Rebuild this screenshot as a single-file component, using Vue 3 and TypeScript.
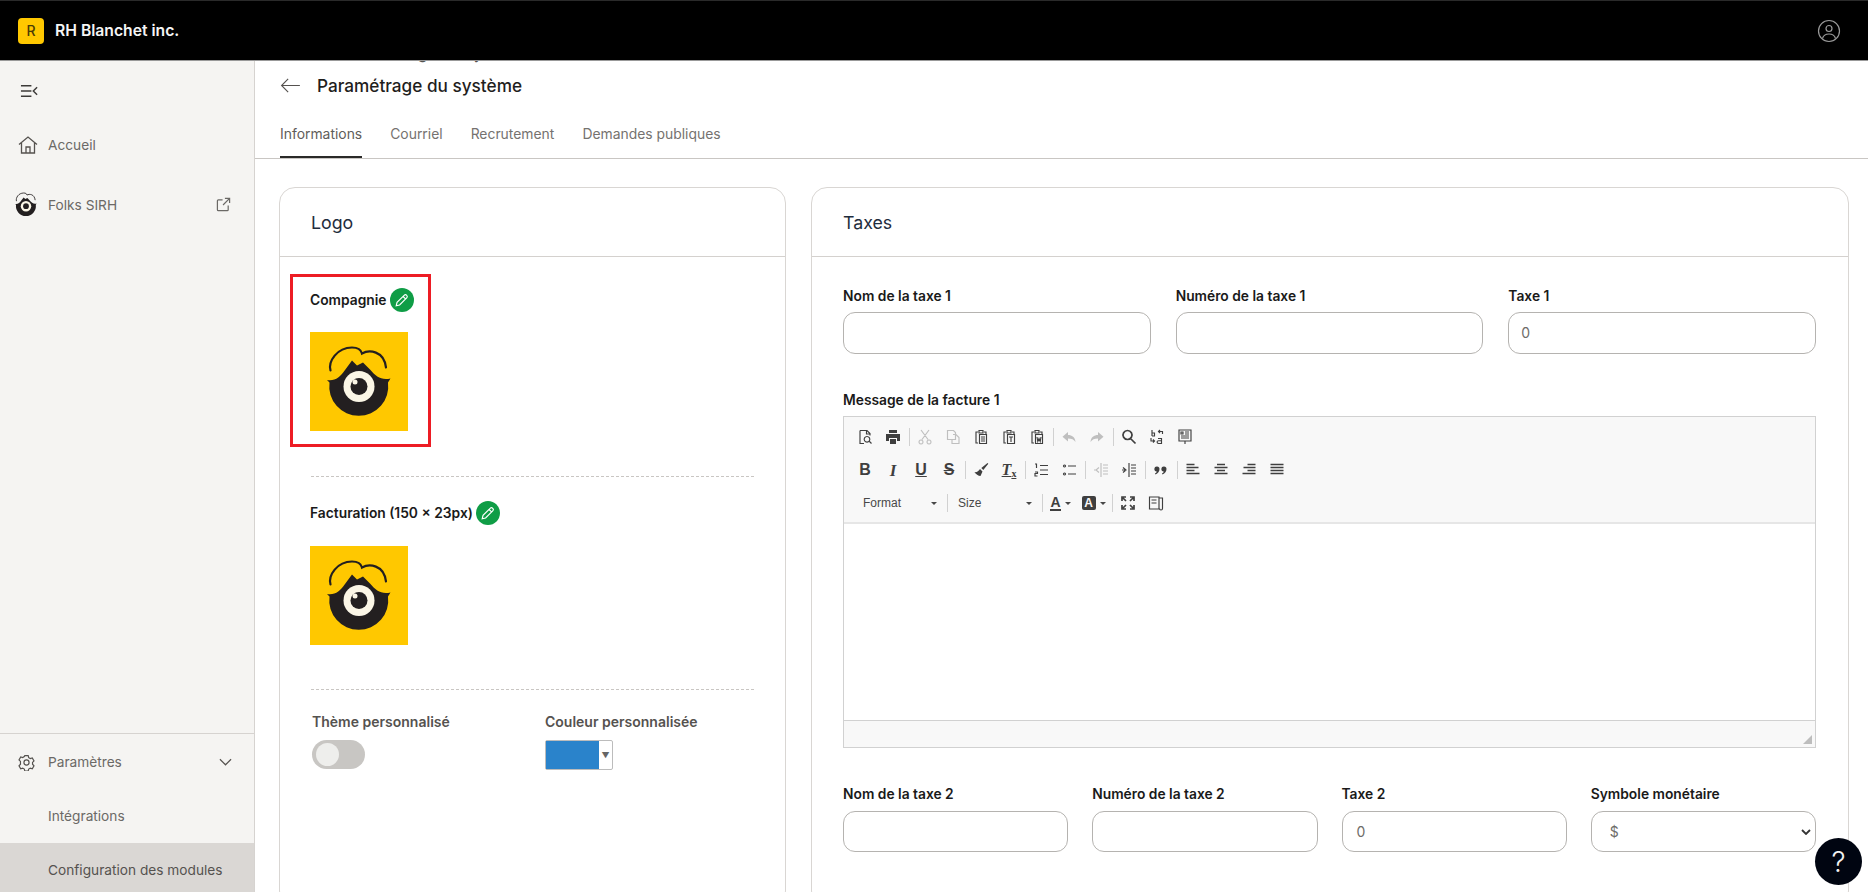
<script setup lang="ts">
type Tool = { key: string; off?: boolean } | "sep";

const row1: Tool[] = [
  { key: "preview" }, { key: "print" }, "sep",
  { key: "cut", off: true }, { key: "copy", off: true }, { key: "paste" }, { key: "pasteT" }, { key: "pasteW" }, "sep",
  { key: "undo", off: true }, { key: "redo", off: true }, "sep",
  { key: "find" }, { key: "replace" }, { key: "template" }
];
const row2: Tool[] = [
  "sep", { key: "ol" }, { key: "ul" }, "sep", { key: "outdent", off: true }, { key: "indent" }, "sep",
  { key: "quote" }, "sep", { key: "left" }, { key: "center" }, { key: "right" }, { key: "justify" }
];

const paths: Record<string, string> = {
  preview: "M3 1.5h7l3 3v2M3 1.5v13h4M9.500 1.500v3.500h3.500M10 7.500a2.800 2.800 0 1 0 .01 0zM12 12l2.500 2.500",
  print: "M4 1h8v3H4zM1 5h14v7h-3V9H4v3H1zM5 10h6v5H5z",
  cut: "M4 1l7 9.500M12 1l-7 9.500M4 11a2 2 0 1 0 .01 0M12 11a2 2 0 1 0 .01 0",
  copy: "M2.500 1.500h6l2 2v7h-8zM8 5.500h3l3 3v6H7v-4",
  paste: "M5 3H3v11h2M6 1.500h4V4H6zM11 3h2v2M6.500 5.500h7v9h-7zM8 8h4M8 10h4M8 12h4",
  pasteT: "M5 3H3v11h2M6 1.500h4V4H6zM11 3h2v2M6.500 5.500h7v9h-7zM8 8h4M10 8v5",
  pasteW: "M5 3H3v11h2M6 1.500h4V4H6zM11 3h2v2M6.500 5.500h7v9h-7zM8 8l.8 4.500L10 9.500l1.200 3L12 8",
  undo: "M7 3v3C11 6 14 8 14.500 13c-1.500-2.500-4-3.500-7.500-3.500v3L1.500 7.700z",
  redo: "M9 3v3C5 6 2 8 1.500 13c1.500-2.500 4-3.500 7.500-3.500v3l5.500-4.800z",
  find: "M6.500 1.500a4.500 4.500 0 1 0 .01 0M10 10l4.500 4.500",
  replace: "M3 1v6M3 4h2.500v3H3M9.500 2.500h4V5M11 1L9.500 2.500 11 4M2 9v3h3.500M4 10.500L5.500 12 4 13.500M9 9.500h3.500v5H9.500a1.200 1.200 0 0 1 0-2.800h3",
  template: "M2 1h12v11H2zM4 3h2v2H4zM8 3h4M8 5h4M4 7h8M4 9h8M8 12v3",
  ol: "M2 2h1.500v4M2 10h2.500v1.500H2V14h2.500M7 3.500h8M7 8h8M7 12.500h8",
  ul: "M7 4h8M7 12h8M3.500 3a1 1 0 1 0 .01 0M3.500 11a1 1 0 1 0 .01 0",
  outdent: "M8 1v14M10 3h5M10 6h5M10 9h5M10 12h5M6 5.500L3 8l3 2.500M1 8h2",
  indent: "M8 1v14M10 3h5M10 6h5M10 9h5M10 12h5M2 5.500L5 8l-3 2.500M1 8h3",
  left: "M1.500 2.500h8M1.500 5.500h12M1.500 8.500h8M1.500 11.500h13",
  center: "M4 2.500h8M1.500 5.500h13M4 8.500h8M1.500 11.500h13",
  right: "M6.500 2.500h8M2.500 5.500h12M6.500 8.500h8M1.500 11.500h13",
  justify: "M1.500 2.500h13M1.500 5.500h13M1.500 8.500h13M1.500 11.500h13",
  quote: "M4 4.500a2.500 2.500 0 0 1 2.500 2.500c0 2.500-1.500 4.500-4 5.500l-.5-1c1-.5 1.500-1 1.700-2A2.500 2.500 0 0 1 4 4.500zM11 4.500A2.500 2.500 0 0 1 13.500 7c0 2.500-1.500 4.500-4 5.500l-.5-1c1-.5 1.500-1 1.700-2A2.500 2.500 0 0 1 11 4.500z",
  maximize: "M2 6V2h4M10 2h4v4M14 10v4h-4M6 14H2v-4M3 3l3 3M13 3l-3 3M13 13l-3-3M3 13l3-3",
  blocks: "M1.500 2h9.500v12H1.500zM3.500 5h5M3.500 8h5M11 3h3.500v10.500a1.500 1.500 0 0 1-3 0"
};

const filled = new Set(["undo", "redo", "print", "quote"]);
const thick = new Set(["find", "left", "center", "right", "justify", "maximize"]);

const fieldsTop = [
  { label: "Nom de la taxe 1", value: "" },
  { label: "Numéro de la taxe 1", value: "" },
  { label: "Taxe 1", value: "0" }
];
const fieldsBottom = [
  { label: "Nom de la taxe 2", value: "" },
  { label: "Numéro de la taxe 2", value: "" },
  { label: "Taxe 2", value: "0" }
];
const penPath = "M3 13l.8-3.200 6.700-6.700a1.600 1.600 0 0 1 2.400 2.400l-6.700 6.700zM9.500 4.200l2.300 2.300";
const hair = "M20.500 38C18 29 27 15 42 15c6 0 9 2 10 6 7-4 22-3 24 14";
const head = "M17 47.500c8 1.500 13-3 18-10l7-9.500 5 5 6-3 7 7c6 7 11 11 20.500 9L78 50a29.500 29.500 0 1 1-58.500 0z";
</script>

<template>
  <div class="page">
    <header class="topbar">
      <div class="brand">
        <span class="brand-badge">R</span>
        <span class="brand-name">RH Blanchet inc.</span>
      </div>
      <svg class="user" viewBox="0 0 24 24" fill="none" stroke="#9a9a9a" stroke-width="1.200">
        <circle cx="12" cy="12" r="10.500" />
        <circle cx="12" cy="9.500" r="3" />
        <path d="M5.500 19.500c.8-3 3.300-4.500 6.500-4.500s5.700 1.500 6.500 4.500" />
      </svg>
    </header>

    <div class="body">
      <aside class="sidebar">
        <div class="side-top">
          <svg class="collapse" viewBox="0 0 20 14" fill="none" stroke="#3c3a38" stroke-width="1.500">
            <path d="M1 1.500h11M1 7h11M1 12.500h11M18 3l-4 4 4 4" />
          </svg>
          <a class="side-link first">
            <svg class="home" viewBox="0 0 20 20" fill="none" stroke="#55524f" stroke-width="1.300">
              <path d="M1 9.500L10 2l9 7.500M3.500 8v10h13V8M8 18v-6h4v6" />
            </svg>
            <span>Accueil</span>
          </a>
          <a class="side-link folks">
            <svg class="folks-logo" viewBox="14 12 70 74">
              <path :d="hair" fill="none" stroke="#231f20" stroke-width="2.500" stroke-linecap="round" />
              <path :d="head" fill="#231f20" />
              <circle cx="49" cy="54" r="15.500" fill="#fbf6e6" />
              <circle cx="49" cy="54" r="8.500" fill="#231f20" />
            </svg>
            <span>Folks SIRH</span>
            <svg class="ext" viewBox="0 0 16 16" fill="none" stroke="#6b6966" stroke-width="1.300">
              <path d="M7 3H2.500a1 1 0 0 0-1 1v9.500a1 1 0 0 0 1 1H12a1 1 0 0 0 1-1V9M9.500 1.500h5v5M14.500 1.500L7.500 8.500" />
            </svg>
          </a>
        </div>
        <div class="side-bottom">
          <a class="side-link settings">
            <svg class="gear" viewBox="0 0 20 20" fill="none" stroke="#55524f" stroke-width="1.400">
              <path d="M8 1.200h4l.6 2.300 1.900 1.100 2.300-.7 2 3.500-1.700 1.700v2.200l1.700 1.700-2 3.500-2.300-.7-1.900 1.100-.6 2.300H8l-.6-2.300-1.900-1.100-2.300.7-2-3.500 1.700-1.700V7.900L1.200 6.200l2-3.500 2.300.7 1.900-1.100z" transform="translate(0 .8)" />
              <circle cx="10" cy="10" r="3" />
            </svg>
            <span>Paramètres</span>
            <svg class="chev" viewBox="0 0 14 8" fill="none" stroke="#55524f" stroke-width="1.300">
              <path d="M1 1l6 6 6-6" />
            </svg>
          </a>
          <a class="sub-link">Intégrations</a>
          <a class="sub-link active">Configuration des modules</a>
        </div>
      </aside>

      <main class="main">
        <div class="ghost">Paramétrage du système</div>
        <div class="heading">
          <svg class="back" viewBox="0 0 22 16" fill="none" stroke="#55524f" stroke-width="1.200">
            <path d="M21 8H1.500M8.500 1L1.500 8l7 7" />
          </svg>
          <h1>Paramétrage du système</h1>
        </div>
        <nav class="tabs">
          <a class="tab current">Informations</a>
          <a class="tab">Courriel</a>
          <a class="tab">Recrutement</a>
          <a class="tab">Demandes publiques</a>
        </nav>

        <div class="cards">
          <section class="card logo-card">
            <h2>Logo</h2>
            <div class="logo-body">
              <div class="marked">
                <div class="logo-label">
                  <b>Compagnie</b>
                  <span class="pen">
                    <svg viewBox="0 0 16 16" fill="none" stroke="#fff" stroke-width="1.100"><path :d="penPath" /></svg>
                  </span>
                </div>
                <div class="logo-box">
                  <svg viewBox="0 0 98 98">
                    <path :d="hair" fill="none" stroke="#231f20" stroke-width="2.200" stroke-linecap="round" />
                    <path :d="head" fill="#231f20" />
                    <circle cx="49" cy="54" r="15.500" fill="#fbf6e6" />
                    <circle cx="49" cy="54" r="8.500" fill="#231f20" />
                    <circle cx="45" cy="49.500" r="2.500" fill="#fbf6e6" />
                  </svg>
                </div>
              </div>
              <hr class="dash first-dash" />
              <div class="logo-label billing">
                <b>Facturation (150 × 23px)</b>
                <span class="pen">
                  <svg viewBox="0 0 16 16" fill="none" stroke="#fff" stroke-width="1.100"><path :d="penPath" /></svg>
                </span>
              </div>
              <div class="logo-box second">
                <svg viewBox="0 0 98 98">
                  <path :d="hair" fill="none" stroke="#231f20" stroke-width="2.200" stroke-linecap="round" />
                  <path :d="head" fill="#231f20" />
                  <circle cx="49" cy="54" r="15.500" fill="#fbf6e6" />
                  <circle cx="49" cy="54" r="8.500" fill="#231f20" />
                  <circle cx="45" cy="49.500" r="2.500" fill="#fbf6e6" />
                </svg>
              </div>
              <hr class="dash second-dash" />
              <div class="theme-row">
                <div class="theme-col">
                  <span class="theme-label">Thème personnalisé</span>
                  <span class="toggle"><i></i></span>
                </div>
                <div class="theme-col">
                  <span class="theme-label">Couleur personnalisée</span>
                  <span class="color"><i></i><em>▼</em></span>
                </div>
              </div>
            </div>
          </section>

          <section class="card tax-card">
            <h2>Taxes</h2>
            <div class="tax-body">
              <div class="row top-row">
                <label v-for="f in fieldsTop" :key="f.label" class="field">
                  <span>{{ f.label }}</span>
                  <div class="input">{{ f.value }}</div>
                </label>
              </div>

              <div class="editor-label">Message de la facture 1</div>
              <div class="editor">
                <div class="toolbar">
                  <div class="tool-row">
                    <template v-for="(t, i) in row1" :key="i">
                      <span v-if="t === 'sep'" class="sep"></span>
                      <span v-else class="btn" :class="{ off: t.off }">
                        <svg viewBox="0 0 16 16" :class="{ thick: thick.has(t.key), solid: filled.has(t.key) }"><path :d="paths[t.key]" /></svg>
                      </span>
                    </template>
                  </div>
                  <div class="tool-row">
                    <span class="btn txt b">B</span>
                    <span class="btn txt i">I</span>
                    <span class="btn txt u">U</span>
                    <span class="btn txt s">S</span>
                    <span class="sep"></span>
                    <span class="btn">
                      <svg viewBox="0 0 16 16" class="solid"><path d="M14.500 1l.8.8-5 6.200-2-2zM7 7l2.500 2.500-2 4.500c-2 0-5-2-6-4 2 .5 4-.5 5.500-3z" /></svg>
                    </span>
                    <span class="btn txt clear">T<small>x</small></span>
                    <template v-for="(t, i) in row2" :key="i">
                      <span v-if="t === 'sep'" class="sep"></span>
                      <span v-else class="btn" :class="{ off: t.off }">
                        <svg viewBox="0 0 16 16" :class="{ thick: thick.has(t.key), solid: filled.has(t.key) }"><path :d="paths[t.key]" /></svg>
                      </span>
                    </template>
                  </div>
                  <div class="tool-row third">
                    <span class="combo format">Format<i class="arrow"></i></span>
                    <span class="sep"></span>
                    <span class="combo size">Size<i class="arrow"></i></span>
                    <span class="sep"></span>
                    <span class="color-btn"><b class="a-line">A</b><i class="arrow"></i></span>
                    <span class="color-btn"><b class="a-box">A</b><i class="arrow"></i></span>
                    <span class="sep"></span>
                    <span class="btn"><svg viewBox="0 0 16 16" class="thick"><path :d="paths.maximize" /></svg></span>
                    <span class="btn"><svg viewBox="0 0 16 16"><path :d="paths.blocks" /></svg></span>
                  </div>
                </div>
                <div class="edit-area"></div>
                <div class="edit-foot"><i class="grip"></i></div>
              </div>

              <div class="row bottom-row">
                <label v-for="f in fieldsBottom" :key="f.label" class="field">
                  <span>{{ f.label }}</span>
                  <div class="input">{{ f.value }}</div>
                </label>
                <label class="field">
                  <span>Symbole monétaire</span>
                  <div class="input select">
                    $
                    <svg viewBox="0 0 10 6" fill="none" stroke="#333" stroke-width="1.800"><path d="M1 1l4 4 4-4" /></svg>
                  </div>
                </label>
              </div>
            </div>
          </section>
        </div>
      </main>
    </div>

    <button class="help">?</button>
  </div>
</template>

<style>
html,
body {
  margin: 0;
  overflow: hidden;
}
</style>

<style scoped>
.page {
  position: relative;
  width: 1868px;
  height: 892px;
  overflow: hidden;
  font-family: Inter, "Liberation Sans", sans-serif;
  color: #1c1b1a;
  background: #fff;
}

.topbar {
  height: 61px;
  box-sizing: border-box;
  border-top: 1px solid #2a2a2a;
  border-bottom: 1px solid #999;
  background: #000;
  display: flex;
  align-items: center;
  justify-content: space-between;
  padding: 0 27px 0 18px;
}

.brand {
  display: flex;
  align-items: center;
  gap: 11px;
}

.brand-badge {
  width: 26px;
  height: 26px;
  border-radius: 4px;
  background: #ffc800;
  color: #4b3c05;
  font-size: 14px;
  font-weight: 500;
  display: flex;
  align-items: center;
  justify-content: center;
}

.brand-name {
  color: #f5f5f5;
  font-size: 15.700px;
  font-weight: 600;
}

.user {
  width: 24px;
  height: 24px;
}

.body {
  display: flex;
  height: 831px;
}

.sidebar {
  width: 255px;
  flex: none;
  box-sizing: border-box;
  background: #f5f4f2;
  border-right: 1px solid #d6d3d0;
  display: flex;
  flex-direction: column;
  justify-content: space-between;
  overflow: hidden;
}

.collapse {
  display: block;
  width: 19px;
  height: 14px;
  margin: 23px 0 0 20px;
}

.side-link {
  display: flex;
  align-items: center;
  font-size: 13.700px;
  color: #6b6966;
  padding-left: 18px;
}

.side-link.first {
  margin-top: 37px;
  gap: 10px;
}

.home {
  width: 20px;
  height: 20px;
  flex: none;
}

.gear {
  width: 17px;
  height: 17px;
  flex: none;
}

.side-link.folks {
  margin-top: 37px;
  padding-left: 14px;
  gap: 10px;
}

.folks-logo {
  width: 24px;
  height: 25px;
  flex: none;
}

.ext {
  width: 15px;
  height: 15px;
  margin-left: auto;
  margin-right: 23px;
}

.side-bottom {
  border-top: 1px solid #d6d3d0;
  margin-bottom: -5px;
}

.side-link.settings {
  padding-top: 18px;
  padding-bottom: 17px;
  gap: 13px;
  line-height: 20px;
}

.chev {
  width: 13px;
  height: 8px;
  margin-left: auto;
  margin-right: 22px;
}

.sub-link {
  display: block;
  height: 54px;
  line-height: 54px;
  padding-left: 48px;
  font-size: 13.700px;
  color: #6b6966;
}

.sub-link.active {
  background: #dad7d4;
  color: #55524f;
}

.main {
  flex: 1;
  min-width: 0;
  position: relative;
  overflow: hidden;
}

.ghost {
  position: absolute;
  top: -18px;
  left: 85px;
  font-size: 16px;
  line-height: 20px;
  color: #55524f;
}

.heading {
  display: flex;
  align-items: center;
  gap: 16px;
  height: 49px;
  padding-left: 25px;
}

.back {
  width: 21px;
  height: 15px;
}

h1 {
  margin: 0;
  font-size: 17.200px;
  font-weight: 500;
  color: #1f1e1d;
}

.tabs {
  display: flex;
  gap: 28px;
  height: 48px;
  padding-left: 25px;
  border-bottom: 1px solid #c9c6c3;
}

.tab {
  font-size: 13.900px;
  color: #75726f;
  line-height: 49px;
  height: 48px;
  box-sizing: border-box;
}

.tab.current {
  color: #5f5d5a;
  border-bottom: 2px solid #2a2928;
}

.cards {
  display: flex;
  gap: 25px;
  padding: 28px 0 0 24px;
}

.card {
  height: 720px;
  flex: none;
  box-sizing: border-box;
  border: 1px solid #d9d6d3;
  border-radius: 16px;
  background: #fff;
}

.logo-card {
  width: 507px;
}

.tax-card {
  width: 1038px;
}

.card h2 {
  margin: 0;
  height: 69px;
  box-sizing: border-box;
  padding: 0 31px;
  font-size: 17.800px;
  font-weight: 400;
  line-height: 70px;
  color: #1f2d3d;
  border-bottom: 1px solid #d4d1ce;
}

.logo-body {
  padding: 17px 31px 0 10px;
}

.marked {
  width: 141px;
  height: 173px;
  box-sizing: border-box;
  border: 3px solid #ed1c24;
  padding: 11px 0 0 17px;
}

.logo-label {
  display: flex;
  align-items: center;
  gap: 3px;
  height: 24px;
  font-size: 13.800px;
  color: #1a1a1a;
}

.logo-label b {
  font-weight: 600;
}

.pen {
  width: 24px;
  height: 24px;
  border-radius: 50%;
  background: #0f9d46;
  display: flex;
  align-items: center;
  justify-content: center;
}

.pen svg {
  width: 17px;
  height: 17px;
}

.logo-box {
  width: 98px;
  height: 99px;
  background: #ffc800;
  margin-top: 20px;
}

.logo-box svg {
  display: block;
  width: 98px;
  height: 99px;
}

.dash {
  margin: 0 0 0 21px;
  border: 0;
  border-top: 1px dashed #c9c6c3;
}

.first-dash {
  margin-top: 29px;
}

.billing {
  margin: 24px 0 0 20px;
}

.logo-box.second {
  margin: 21px 0 0 20px;
}

.second-dash {
  margin-top: 44px;
}

.theme-row {
  display: flex;
  margin: 24px 0 0 22px;
}

.theme-col {
  width: 233px;
  flex: none;
  display: flex;
  flex-direction: column;
  gap: 10px;
}

.theme-label {
  font-size: 14px;
  font-weight: 600;
  color: #55524f;
  line-height: 16px;
}

.toggle {
  width: 53px;
  height: 29px;
  border-radius: 15px;
  background: #c8c6c3;
  display: block;
  position: relative;
}

.toggle i {
  position: absolute;
  left: 4px;
  top: 3px;
  width: 23px;
  height: 23px;
  border-radius: 50%;
  background: #eeeeec;
}

.color {
  width: 68px;
  height: 30px;
  box-sizing: border-box;
  display: flex;
  border: 1px solid #bcbcbc;
  border-radius: 2px;
  background: #fff;
}

.color i {
  flex: none;
  width: 53px;
  background: #2a83cb;
}

.color em {
  flex: 1;
  font-style: normal;
  font-size: 8px;
  color: #666;
  text-align: center;
  line-height: 28px;
}

.tax-body {
  padding: 31px 32px 0 31px;
}

.row {
  display: flex;
}

.top-row {
  gap: 25px;
}

.top-row .input {
  padding-left: 12px;
}

.bottom-row {
  gap: 24px;
  margin-top: 38px;
}

.field {
  flex: 1;
  min-width: 0;
  display: flex;
  flex-direction: column;
  gap: 8px;
  font-size: 13.800px;
  font-weight: 600;
  color: #1a1a1a;
}

.field > span {
  line-height: 16px;
}

.input {
  height: 42px;
  box-sizing: border-box;
  border: 1px solid #b5b3b0;
  border-radius: 12px;
  font-size: 14px;
  font-weight: 400;
  color: #6e6c69;
  padding: 0 14px;
  line-height: 40px;
  position: relative;
}

.input.select {
  padding-left: 18px;
}

.input.select svg {
  position: absolute;
  right: 4px;
  top: 17px;
  width: 10px;
  height: 6px;
}

.bottom-row .field {
  gap: 9px;
}

.bottom-row .input {
  height: 41px;
}

.editor-label {
  margin-top: 38px;
  font-size: 13.800px;
  font-weight: 600;
  color: #1a1a1a;
  line-height: 16px;
}

.editor {
  margin-top: 8px;
  height: 332px;
  box-sizing: border-box;
  border: 1px solid #d1d1d1;
  display: flex;
  flex-direction: column;
}

.toolbar {
  height: 107px;
  box-sizing: border-box;
  background: #f8f8f8;
  border-bottom: 2px solid #e6e6e6;
  padding: 6px 0 0 7px;
  display: flex;
  flex-direction: column;
  gap: 5px;
}

.tool-row {
  height: 28px;
  display: flex;
  align-items: center;
}

.btn {
  width: 28px;
  height: 24px;
  flex: none;
  display: flex;
  align-items: center;
  justify-content: center;
  color: #3f3f3f;
}

.btn svg {
  width: 16px;
  height: 16px;
  fill: none;
  stroke: #3f3f3f;
  stroke-width: 1.150;
}

.btn svg.thick {
  stroke-width: 1.700;
}

.btn svg.solid {
  fill: #3f3f3f;
  stroke: none;
}

.btn.off {
  opacity: 0.3;
}

.sep {
  width: 1px;
  height: 18px;
  flex: none;
  margin: 0 1.500px;
  background: #d1d1d1;
}

.txt {
  font-family: "Liberation Sans", sans-serif;
  font-size: 16px;
  line-height: 1;
}

.txt.b {
  font-weight: 700;
}

.txt.i {
  font-family: "Liberation Serif", serif;
  font-weight: 700;
  font-style: italic;
  font-size: 17px;
}

.txt.u {
  font-weight: 700;
  text-decoration: underline;
}

.txt.s {
  font-weight: 700;
  text-decoration: line-through;
}

.txt.clear {
  font-family: "Liberation Serif", serif;
  font-style: italic;
  font-weight: 700;
  text-decoration: underline;
}

.txt.clear small {
  font-size: 10px;
  font-style: normal;
  align-self: flex-end;
  margin-bottom: 3px;
}

.third {
  font-family: "Liberation Sans", sans-serif;
}

.combo {
  position: relative;
  flex: none;
  font-size: 12px;
  color: #484848;
  height: 24px;
  line-height: 24px;
  box-sizing: border-box;
}

.combo.format {
  width: 94px;
  padding-left: 12px;
}

.combo.size {
  width: 91px;
  padding-left: 9px;
}

.arrow {
  display: inline-block;
  width: 0;
  height: 0;
  border-left: 3px solid transparent;
  border-right: 3px solid transparent;
  border-top: 3px solid #474747;
}

.combo .arrow {
  position: absolute;
  right: 8px;
  top: 11px;
}

.color-btn {
  flex: none;
  width: 33px;
  display: flex;
  align-items: center;
  justify-content: center;
  gap: 4px;
}

.a-line {
  font-size: 14px;
  color: #3f3f3f;
  border-bottom: 2px solid #3f3f3f;
  line-height: 14px;
}

.a-box {
  width: 14px;
  height: 14px;
  background: #3f3f3f;
  color: #f8f8f8;
  font-size: 12px;
  line-height: 14px;
  text-align: center;
  border-radius: 2px;
}

.edit-area {
  flex: 1;
  background: #fff;
}

.edit-foot {
  height: 26px;
  position: relative;
  background: #f8f8f8;
  border-top: 1px solid #d1d1d1;
}

.grip {
  position: absolute;
  right: 3px;
  bottom: 3px;
  width: 0;
  height: 0;
  border-left: 9px solid transparent;
  border-bottom: 9px solid #bdbdbd;
}

.help {
  position: absolute;
  right: 6px;
  bottom: 7px;
  width: 47px;
  height: 47px;
  border: 0;
  border-radius: 50%;
  background: #000511;
  color: #f2f2f2;
  font-family: Inter, sans-serif;
  font-size: 28px;
  font-weight: 300;
  padding: 0;
}
</style>
